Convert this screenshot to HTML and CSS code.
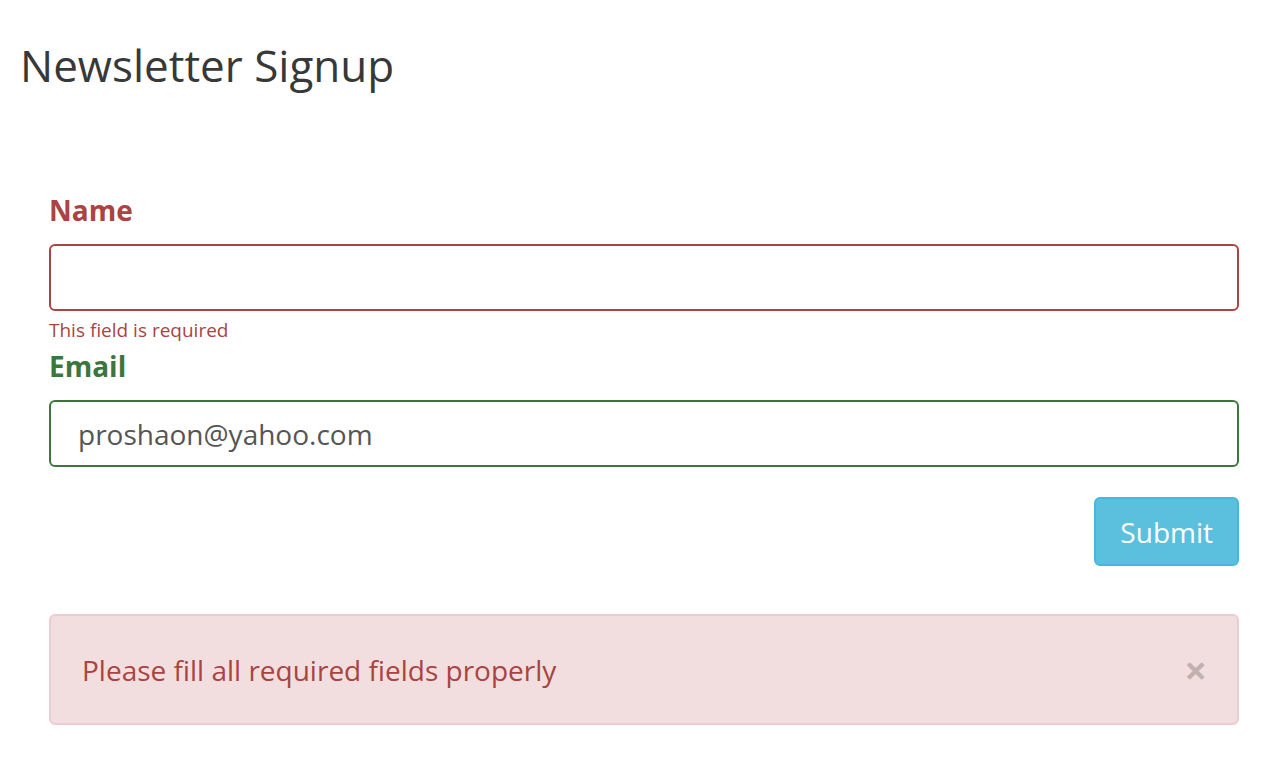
FILE: index.html
```html
<!DOCTYPE html>
<html lang="en">
<head>
<meta charset="utf-8">
<title>Newsletter Signup</title>
<link rel="stylesheet" href="styles.css">
</head>
<body>
<div class="page">
  <h1 class="title">Newsletter Signup</h1>
  <form class="signup">
    <div class="group group-error">
      <label class="label" for="name">Name</label>
      <input class="field" id="name" type="text" value="">
      <div class="help">This field is required</div>
    </div>
    <div class="group group-success">
      <label class="label" for="email">Email</label>
      <input class="field" id="email" type="email" value="proshaon@yahoo.com">
    </div>
    <div class="actions">
      <button class="btn-submit" type="button">Submit</button>
    </div>
    <div class="alert">
      <span class="alert-text">Please fill all required fields properly</span>
      <span class="close">&times;</span>
    </div>
  </form>
</div>
</body>
</html>
```

FILE: styles.css
```css
* { box-sizing: border-box; }
html, body { margin: 0; padding: 0; background: #fff; }
body {
  font-family: "Open Sans", "Noto Sans", sans-serif;
  color: #333;
}
.page { padding: 41px 45px 0 0; }
.title {
  margin: 0;
  padding-left: 20px;
  font-size: 44px;
  font-weight: 400;
  line-height: 48px;
  color: #383838;
}
.signup {
  margin-top: 101px;
  padding-left: 49px;
  display: flex;
  flex-direction: column;
}
.group { display: flex; flex-direction: column; }
.label {
  font-size: 28px;
  font-weight: 700;
  line-height: 40px;
  margin-bottom: 14px;
}
.group-error .label { color: #a94442; }
.group-success .label { color: #3c763d; }
.field {
  height: 67px;
  width: 100%;
  border: 2px solid #ccc;
  border-radius: 6px;
  padding: 0 27px;
  font-family: "Open Sans", "Noto Sans", sans-serif;
  font-size: 28px;
  color: #555;
  background: #fff;
  outline: none;
}
.group-error .field { border-color: #a94442; }
.group-success .field { border-color: #3c763d; }
.help {
  margin-top: 5px;
  font-size: 19px;
  line-height: 28px;
  color: #a94442;
  margin-bottom: 2px;
}
.actions {
  display: flex;
  justify-content: flex-end;
  margin-top: 30px;
}
.btn-submit {
  height: 69px;
  padding: 0 24px;
  border: 2px solid #46b8da;
  border-radius: 6px;
  background: #5bc0de;
  color: #fff;
  font-family: "Open Sans", "Noto Sans", sans-serif;
  font-size: 28px;
}
.alert {
  margin-top: 48px;
  height: 111px;
  display: flex;
  align-items: center;
  justify-content: space-between;
  padding: 0 30px 0 31px;
  background: #f2dede;
  border: 2px solid #ebccd1;
  border-radius: 6px;
  color: #a94442;
  font-size: 28px;
}
.close {
  font-size: 40px;
  font-weight: 700;
  line-height: 1;
  color: #000;
  opacity: 0.2;
}
```
